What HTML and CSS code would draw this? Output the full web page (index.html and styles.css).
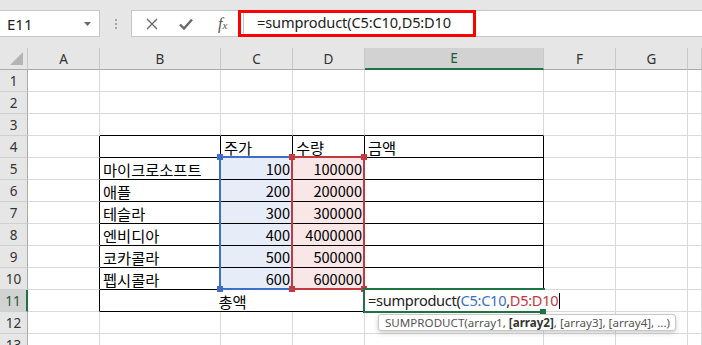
FILE: index.html
```html
<!DOCTYPE html>
<html lang="ko">
<head>
    <meta charset="UTF-8">
    <meta name="viewport" content="width=device-width, initial-scale=1.0">
    <title>SUMPRODUCT</title>
    <link rel="stylesheet" href="styles.css">
</head>
<body>

    <!-- 수식 입력줄 -->
    <div class="toolbar">
        <div class="name-box">
            <span>E11</span>
            <svg width="7" height="4" viewBox="0 0 7 4"><path d="M0 0h7L3.5 4z" fill="#6a6a6a"/></svg>
        </div>
        <div class="grip"><i></i><i></i><i></i></div>
        <div class="fx-box">
            <svg width="12" height="12" viewBox="0 0 12 12"><path d="M1 1l10 10M11 1L1 11" stroke="#6a6a6a" stroke-width="1.4" fill="none"/></svg>
            <svg width="14" height="12" viewBox="0 0 14 12"><path d="M1 6.5l4 4L13 1.5" stroke="#6a6a6a" stroke-width="2.4" fill="none"/></svg>
            <span class="fx">f<small>x</small></span>
        </div>
        <div class="formula">
            <div class="mark"><span class="formula-text">=sumproduct(C5:C10,D5:D10</span></div>
        </div>
    </div>

    <!-- 시트 -->
    <div class="sheet">
        <table class="grid">
            <colgroup>
                <col class="w-hd"><col class="w-a"><col class="w-b"><col class="w-c"><col class="w-d">
                <col class="w-e"><col class="w-f"><col class="w-g"><col class="w-h">
            </colgroup>
            <thead>
                <tr>
                    <th class="corner"><span class="tri"></span></th>
                    <th>A</th><th>B</th><th>C</th><th>D</th><th class="on">E</th><th>F</th><th>G</th><th></th>
                </tr>
            </thead>
            <tbody>
                <tr><th>1</th><td></td><td></td><td></td><td></td><td></td><td></td><td></td><td></td></tr>
                <tr><th>2</th><td></td><td></td><td></td><td></td><td></td><td></td><td></td><td></td></tr>
                <tr><th>3</th><td></td><td class="edge-b"></td><td class="edge-b"></td><td class="edge-b"></td><td class="edge-b"></td><td></td><td></td><td></td></tr>
                <tr><th>4</th><td class="edge-r"></td><td class="box"></td><td class="box">주가</td><td class="box">수량</td><td class="box">금액</td><td></td><td></td><td></td></tr>
                <tr><th>5</th><td class="edge-r"></td><td class="box">마이크로소프트</td><td class="box num blue">100</td><td class="box num red">100000</td><td class="box"></td><td></td><td></td><td></td></tr>
                <tr><th>6</th><td class="edge-r"></td><td class="box">애플</td><td class="box num blue">200</td><td class="box num red">200000</td><td class="box"></td><td></td><td></td><td></td></tr>
                <tr><th>7</th><td class="edge-r"></td><td class="box">테슬라</td><td class="box num blue">300</td><td class="box num red">300000</td><td class="box"></td><td></td><td></td><td></td></tr>
                <tr><th>8</th><td class="edge-r"></td><td class="box">엔비디아</td><td class="box num blue">400</td><td class="box num red">4000000</td><td class="box"></td><td></td><td></td><td></td></tr>
                <tr><th>9</th><td class="edge-r"></td><td class="box">코카콜라</td><td class="box num blue">500</td><td class="box num red">500000</td><td class="box"></td><td></td><td></td><td></td></tr>
                <tr><th>10</th><td class="edge-r"></td><td class="box">펩시콜라</td><td class="box num blue">600</td><td class="box num red">600000</td><td class="box"></td><td></td><td></td><td></td></tr>
                <tr><th class="on">11</th><td class="edge-r"></td><td class="box mid" colspan="3">총액</td><td class="box"></td><td></td><td></td><td></td></tr>
                <tr><th>12</th><td></td><td></td><td></td><td></td><td></td><td></td><td></td><td></td></tr>
                <tr><th>13</th><td></td><td></td><td></td><td></td><td></td><td></td><td></td><td></td></tr>
            </tbody>
        </table>

        <!-- 참조 범위 표시 -->
        <div class="range range-c"><i class="h tl"></i><i class="h bl"></i></div>
        <div class="range range-d"><i class="h tl"></i><i class="h tr"></i><i class="h bl"></i><i class="h br"></i></div>

        <!-- 편집 중인 셀 -->
        <div class="active-cell"></div>
        <div class="editor">=sumproduct(<span class="ref-c">C5:C10</span>,<span class="ref-d">D5:D10</span><span class="caret"></span></div>
        <div class="fill-handle"></div>
        <div class="tip">SUMPRODUCT(array1, <b>[array2]</b>, [array3], [array4], ...)</div>
    </div>

</body>
</html>
```

FILE: styles.css
```css
/* 기본 */
body {
    margin: 0;
    font-family: "Noto Sans", "Noto Sans CJK KR", sans-serif;
    background-color: #ffffff;
    overflow: hidden;
}

/* 수식 입력줄 */
.toolbar {
    display: flex;
    align-items: flex-start;
    height: 48px;
    padding-top: 10px;
    box-sizing: border-box;
    background-color: #e6e6e6;
}

.name-box {
    display: flex;
    align-items: center;
    justify-content: space-between;
    width: 100px;
    height: 27px;
    padding: 0 8px 0 7px;
    box-sizing: border-box;
    background-color: #fff;
    border: 1px solid #c6c6c6;
    border-left: none;
    font-size: 15px;
    color: #222;
}

.grip {
    display: flex;
    flex-direction: column;
    align-items: center;
    gap: 2px;
    width: 31px;
    padding-top: 9px;
}

.grip i {
    width: 2px;
    height: 2px;
    background-color: #a6a6a6;
}

.fx-box {
    display: flex;
    align-items: center;
    width: 107px;
    height: 27px;
    padding-left: 14px;
    gap: 21px;
    box-sizing: border-box;
    background-color: #fff;
    border: 1px solid #c6c6c6;
    border-right: none;
}

.fx {
    font-family: "Liberation Serif", serif;
    font-style: italic;
    font-size: 16px;
    color: #555;
    margin-left: 4px;
}

.fx small {
    font-size: 11px;
}

.formula {
    flex: 1;
    height: 27px;
    background-color: #fff;
    border-top: 1px solid #c6c6c6;
    border-bottom: 1px solid #c6c6c6;
    box-sizing: border-box;
    position: relative;
}

.mark {
    position: absolute;
    left: 0;
    top: -1px;
    width: 238px;
    height: 27px;
    box-sizing: border-box;
    border: 3px solid #ff0000;
    padding: 0 0 0 2px;
}

.formula-text {
    display: block;
    height: 21px;
    border-left: 1px solid #c6c6c6;
    padding-left: 13px;
    font-size: 14.6px;
    letter-spacing: -0.15px;
    line-height: 19px;
    color: #222;
    white-space: nowrap;
}

/* 시트 */
.sheet {
    position: relative;
}

.grid {
    border-collapse: separate;
    border-spacing: 0;
    table-layout: fixed;
    width: 702px;
}

.w-hd { width: 28px; }
.w-a { width: 72px; }
.w-b { width: 121px; }
.w-c { width: 72px; }
.w-d { width: 72px; }
.w-e { width: 179px; }
.w-f { width: 72px; }
.w-g { width: 72px; }
.w-h { width: 14px; }

.grid th {
    padding: 0;
    background-color: #e6e6e6;
    font-weight: normal;
    font-size: 13.5px;
    color: #333;
    box-sizing: border-box;
}

.grid thead th {
    height: 22px;
    border-right: 1px solid #c8c8c8;
    border-bottom: 1px solid #ababab;
    line-height: 20px;
}

.grid tbody th {
    height: 22px;
    border-right: 1px solid #ababab;
    border-bottom: 1px solid #d0d0d0;
    line-height: 20px;
}

.grid th.on {
    background-color: #d2d2d2;
    color: #1e5c36;
}

.grid thead th.on {
    border-bottom: 2px solid #217346;
}

.grid tbody th.on {
    border-right: 2px solid #217346;
}

.corner {
    position: relative;
}

.tri {
    position: absolute;
    right: 4px;
    bottom: 4px;
    width: 0;
    height: 0;
    border-left: 13px solid transparent;
    border-bottom: 13px solid #b4b4b4;
}

.grid td {
    height: 22px;
    padding: 0 2px 0 3px;
    box-sizing: border-box;
    border-right: 1px solid #d9d9d9;
    border-bottom: 1px solid #d9d9d9;
    font-family: "Noto Sans CJK KR", sans-serif;
    font-size: 15.3px;
    line-height: 20px;
    color: #000;
    white-space: nowrap;
    overflow: hidden;
}

.grid td.edge-r { border-right-color: #000; }
.grid td.edge-b { border-bottom-color: #000; }
.grid td.box { border-right-color: #000; border-bottom-color: #000; }
.grid td.num { text-align: right; font-size: 14.6px; }
.grid td.mid { text-align: center; }
.grid td.blue { background-color: #e7edf8; }
.grid td.red { background-color: #f9e6e6; }

/* 참조 범위 테두리 */
.range {
    position: absolute;
    top: 108px;
    width: 74px;
    height: 134px;
    box-sizing: border-box;
    border: 2px solid;
}

.range-c { left: 219px; border-color: #3d6fc6; }
.range-d { left: 291px; border-color: #c3393d; }

.range .h {
    position: absolute;
    width: 6px;
    height: 6px;
}

.range-c .h { background-color: #3d6fc6; }
.range-d .h { background-color: #c3393d; }

.h.tl { left: -4px; top: -4px; }
.h.tr { right: -4px; top: -4px; }
.h.bl { left: -4px; bottom: -4px; }
.h.br { right: -4px; bottom: -4px; }

/* 활성 셀과 편집기 */
.active-cell {
    position: absolute;
    left: 363px;
    top: 240px;
    width: 182px;
    height: 25px;
    box-sizing: border-box;
    border: 2px solid #217346;
}

.editor {
    position: absolute;
    left: 365px;
    top: 242px;
    width: 205px;
    height: 21px;
    padding-left: 3px;
    box-sizing: border-box;
    background-color: #fff;
    font-size: 14.6px;
    letter-spacing: -0.3px;
    line-height: 20px;
    color: #222;
    white-space: nowrap;
}

.ref-c { color: #3d6fc6; }
.ref-d { color: #c3393d; }

.caret {
    display: inline-block;
    width: 1px;
    height: 16px;
    margin-left: 1px;
    vertical-align: -3px;
    background-color: #000;
}

.fill-handle {
    position: absolute;
    left: 540px;
    top: 261px;
    width: 6px;
    height: 5px;
    background-color: #217346;
}

.tip {
    position: absolute;
    left: 378px;
    top: 266px;
    width: 298px;
    height: 17px;
    padding-left: 6px;
    box-sizing: border-box;
    background-color: #fff;
    border: 1px solid #c8c8c8;
    border-radius: 3px;
    box-shadow: 0 2px 5px rgba(0, 0, 0, 0.2);
    font-size: 11.6px;
    line-height: 15px;
    color: #555;
    white-space: nowrap;
}

.tip b {
    color: #333;
}
```
